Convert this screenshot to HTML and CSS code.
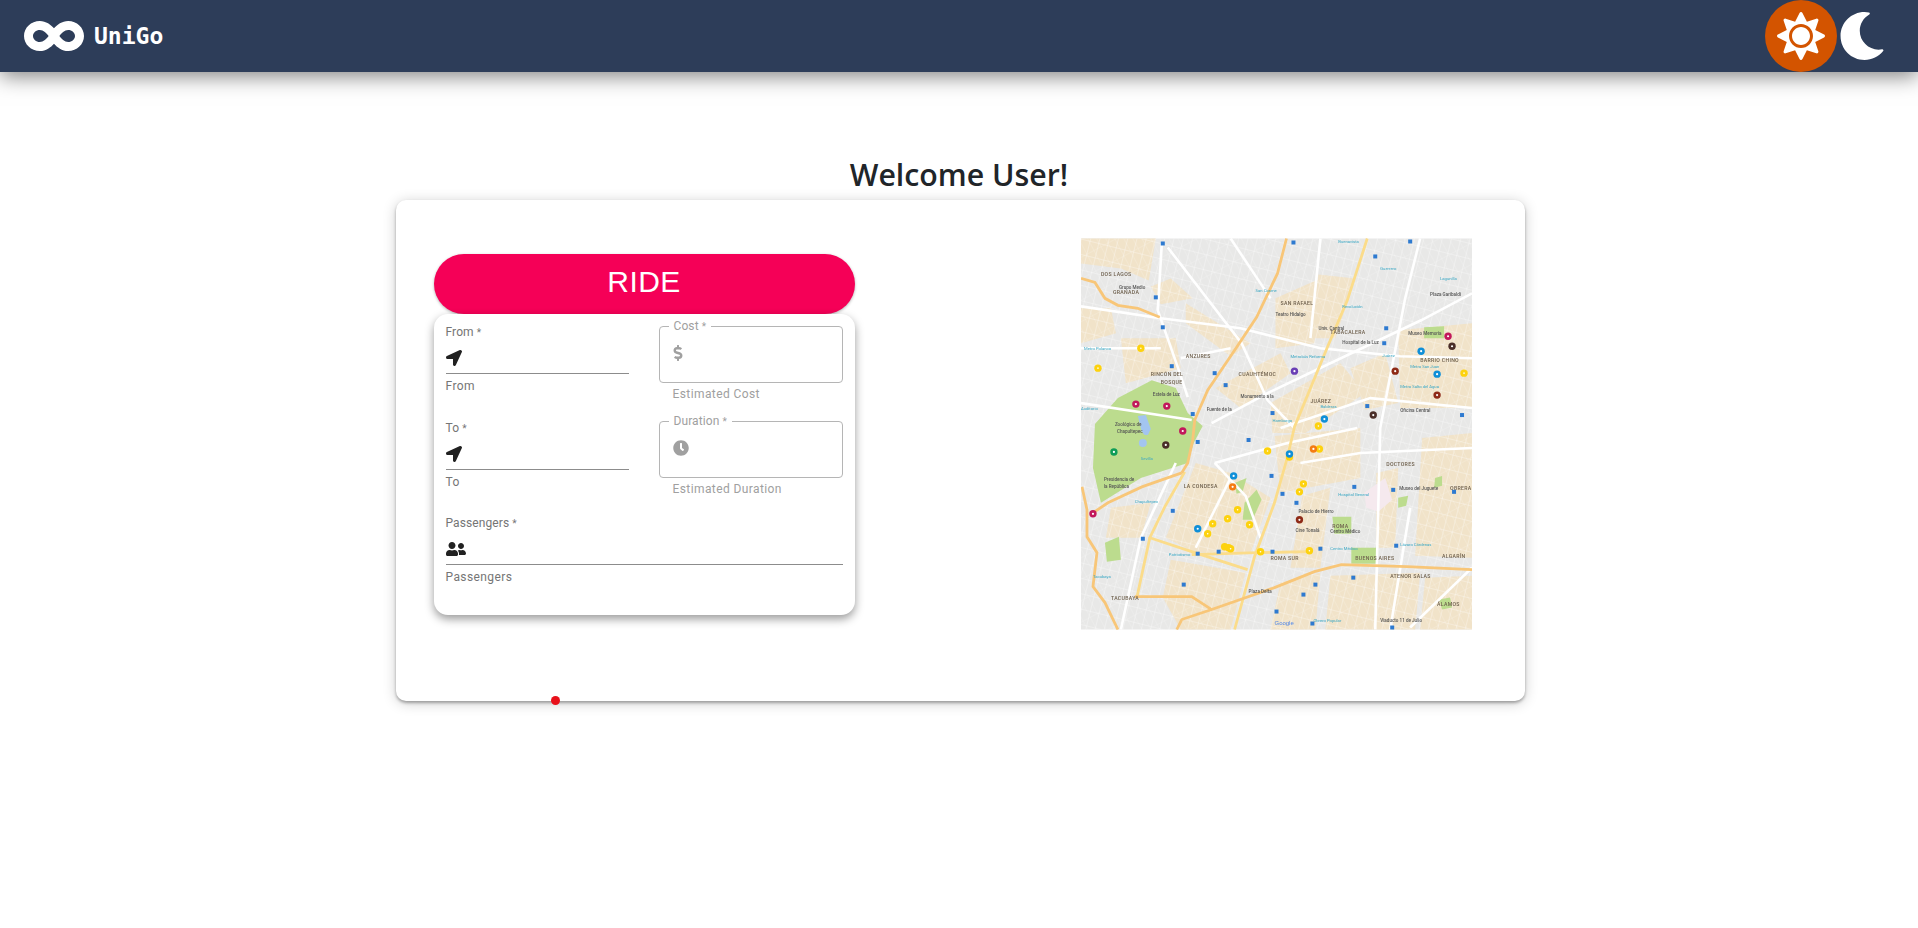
FILE: index.html
```html
<!DOCTYPE html>
<html lang="en">
<head>
<meta charset="utf-8">
<title>UniGo</title>
<link rel="stylesheet" href="styles.css">
</head>
<body>
<header class="navbar">
  <div class="brand">
    <svg class="brand-icon" viewBox="0 0 640 512"><path d="M471.1 96C405 96 353.3 137.3 320 174.6 286.7 137.3 235 96 168.9 96 75.8 96 0 167.8 0 256s75.8 160 168.9 160c66.1 0 117.8-41.3 151.1-78.6 33.3 37.3 85 78.6 151.1 78.6 93.1 0 168.9-71.8 168.9-160S564.2 96 471.1 96zM168.9 320c-40.2 0-72.9-28.7-72.9-64s32.7-64 72.9-64c38.2 0 73.4 36.1 94 64-20.4 27.6-55.9 64-94 64zm302.2 0c-38.2 0-73.4-36.1-94-64 20.4-27.6 55.9-64 94-64 40.2 0 72.9 28.7 72.9 64s-32.7 64-72.9 64z"/></svg>
    <span class="brand-name">UniGo</span>
  </div>
  <div class="theme">
    <div class="theme-sun">
      <svg class="theme-icon" viewBox="0 0 512 512"><path d="M256 160c-52.9 0-96 43.1-96 96s43.1 96 96 96 96-43.1 96-96-43.1-96-96-96zm246.4 80.5l-94.7-47.3 33.5-100.4c4.5-13.6-8.4-26.5-21.9-21.9l-100.4 33.5-47.4-94.8c-6.4-12.8-24.6-12.8-31 0l-47.3 94.7L92.7 70.8c-13.6-4.5-26.5 8.4-21.9 21.9l33.5 100.4-94.7 47.4c-12.8 6.4-12.8 24.6 0 31l94.7 47.3-33.5 100.5c-4.5 13.6 8.4 26.5 21.9 21.9l100.4-33.5 47.3 94.7c6.4 12.8 24.6 12.8 31 0l47.3-94.7 100.4 33.5c13.6 4.5 26.5-8.4 21.9-21.9l-33.5-100.4 94.7-47.3c13-6.5 13-24.7.2-31.1zm-155.9 106c-49.9 49.9-131.1 49.9-181 0-49.9-49.9-49.9-131.1 0-181 49.9-49.9 131.1-49.9 181 0 49.9 49.9 49.9 131.1 0 181z"/></svg>
    </div>
    <svg class="theme-icon moon" viewBox="0 0 512 512"><path d="M283.211 512c78.962 0 151.079-35.925 198.857-94.792 7.068-8.708-.639-21.43-11.562-19.35-124.203 23.654-238.262-71.576-238.262-196.954 0-72.222 38.662-138.635 101.498-174.394 9.686-5.512 7.25-20.197-3.756-22.23A258.156 258.156 0 0 0 283.211 0c-141.309 0-256 114.511-256 256 0 141.309 114.511 256 256 256z"/></svg>
  </div>
</header>

<main class="page">
  <h1 class="title">Welcome User!</h1>
  <section class="card">
    <span class="dot"></span>
    <div class="left">
      <button class="ride">RIDE</button>
      <form class="panel">
        <div class="field">
          <label class="label">From <span class="req">*</span></label>
          <div class="input-row">
            <svg class="icon arrow" viewBox="0 0 512 512"><path d="M444.52 3.52L28.74 195.42c-47.97 22.39-31.98 92.75 19.19 92.75h175.91v175.91c0 51.17 70.36 67.17 92.75 19.19l191.9-415.78c15.99-38.39-25.59-79.97-63.97-63.97z"/></svg>
          </div>
          <p class="helper">From</p>
        </div>
        <div class="outlined">
          <div class="box">
            <span class="box-label">Cost <span class="req">*</span></span>
            <svg class="icon dollar" viewBox="0 0 288 512"><path d="M209.2 233.4l-108-31.6C88.7 198.2 80 186.5 80 173.5c0-16.3 13.2-29.5 29.5-29.5h66.3c12.2 0 24.2 3.7 34.2 10.5 6.1 4.1 14.3 3.1 19.5-2l34.8-34c7.1-6.9 6.1-18.4-1.8-24.5C238 74.8 207.4 64.1 176 64V16c0-8.8-7.2-16-16-16h-32c-8.8 0-16 7.2-16 16v48h-2.5C45.8 64-5.4 118.7.5 183.6c4.2 46.1 39.4 83.6 83.8 96.6l102.5 30c12.5 3.7 21.2 15.3 21.2 28.3 0 16.3-13.2 29.5-29.5 29.5h-66.3C100 368 88 364.3 78 357.5c-6.1-4.1-14.3-3.1-19.5 2l-34.8 34c-7.1 6.9-6.1 18.4 1.8 24.5 24.5 19.2 55.1 29.9 86.5 30v48c0 8.8 7.2 16 16 16h32c8.8 0 16-7.2 16-16v-48.2c46.6-.9 90.3-28.6 105.7-72.7 21.5-61.6-14.6-124.8-72.5-141.7z"/></svg>
          </div>
          <p class="box-helper">Estimated Cost</p>
        </div>
        <div class="field">
          <label class="label">To <span class="req">*</span></label>
          <div class="input-row">
            <svg class="icon arrow" viewBox="0 0 512 512"><path d="M444.52 3.52L28.74 195.42c-47.97 22.39-31.98 92.75 19.19 92.75h175.91v175.91c0 51.17 70.36 67.17 92.75 19.19l191.9-415.78c15.99-38.39-25.59-79.97-63.97-63.97z"/></svg>
          </div>
          <p class="helper">To</p>
        </div>
        <div class="outlined">
          <div class="box">
            <span class="box-label">Duration <span class="req">*</span></span>
            <svg class="icon clock" viewBox="0 0 512 512"><path d="M256,8C119,8,8,119,8,256S119,504,256,504,504,393,504,256,393,8,256,8Zm92.49,313h0l-20,25a16,16,0,0,1-22.49,2.5h0l-67-49.72a40,40,0,0,1-15-31.23V112a16,16,0,0,1,16-16h32a16,16,0,0,1,16,16V256l58,42.5A16,16,0,0,1,348.49,321Z"/></svg>
          </div>
          <p class="box-helper">Estimated Duration</p>
        </div>
        <div class="field wide">
          <label class="label">Passengers <span class="req">*</span></label>
          <div class="input-row">
            <svg class="icon users" viewBox="0 0 640 512"><path d="M192 256c61.9 0 112-50.1 112-112S253.9 32 192 32 80 82.1 80 144s50.1 112 112 112zm76.8 32h-8.3c-20.8 10-43.9 16-68.5 16s-47.6-6-68.5-16h-8.3C51.6 288 0 339.6 0 403.2V432c0 26.5 21.5 48 48 48h288c26.5 0 48-21.5 48-48v-28.8c0-63.6-51.6-115.2-115.2-115.2zM480 256c53 0 96-43 96-96s-43-96-96-96-96 43-96 96 43 96 96 96zm48 32h-3.8c-13.9 4.8-28.6 8-44.2 8s-30.3-3.2-44.2-8H432c-20.4 0-39.2 5.9-55.7 15.4 24.4 26.3 39.7 61.2 39.7 99.8v38.4c0 2.2-.5 4.3-.6 6.4H592c26.5 0 48-21.5 48-48 0-61.9-50.1-112-112-112z"/></svg>
          </div>
          <p class="helper">Passengers</p>
        </div>
      </form>
    </div>

    <svg class="map" viewBox="0 0 392 392">
      <defs>
        <pattern id="gridA" width="9" height="15" patternUnits="userSpaceOnUse" patternTransform="rotate(14)">
          <path class="grid-line" d="M0 0H9M0 0V15"/>
        </pattern>
        <pattern id="gridB" width="8" height="19" patternUnits="userSpaceOnUse" patternTransform="rotate(-28 100 100)">
          <path class="grid-line" d="M0 0H8M0 0V19"/>
        </pattern>
      </defs>
      <rect class="land" width="392" height="392"/>
      <g class="beige">
        <polygon points="0,0 75,0 68,42 40,30 0,25"/>
        <polygon points="70,48 90,40 112,60 80,66"/>
        <polygon points="105,65 170,105 150,118 105,85"/>
        <polygon points="195,60 240,40 234,105 195,110"/>
        <polygon points="238,36 275,40 255,100 232,100"/>
        <polygon points="190,165 260,125 285,155 225,195 192,195"/>
        <polygon points="135,150 200,115 210,135 160,170"/>
        <polygon points="318,92 392,85 392,170 320,170"/>
        <polygon points="270,130 305,115 318,165 285,172"/>
        <polygon points="115,225 150,235 190,260 170,315 115,315 85,300"/>
        <polygon points="194,198 280,190 280,240 200,255"/>
        <polygon points="222,258 250,250 240,330 210,330"/>
        <polygon points="342,200 392,195 392,320 335,318"/>
        <polygon points="296,235 318,230 315,310 296,310"/>
        <polygon points="250,338 340,335 335,392 245,392"/>
        <polygon points="90,322 165,335 150,392 100,392 82,360"/>
        <polygon points="345,340 392,338 392,392 340,392"/>
        <polygon points="0,70 30,70 35,95 0,105"/>
        <polygon points="40,100 95,100 100,130 45,145"/>
        <polygon points="30,270 70,265 60,300 25,300"/>
        <polygon points="200,345 240,335 235,392 190,392"/>
      </g>
      <rect class="grid-a" width="392" height="392"/>
      <rect class="grid-b" width="392" height="392"/>
      <g class="park">
        <polygon points="14,186 37,160 71,142 95,150 107,175 122,188 113,205 107,225 60,240 20,265 12,230"/>
        <polygon points="344,89 364,88 364,100 344,100"/>
        <polygon points="164,265 176,252 181,262 172,282 162,282"/>
        <polygon points="252,279 271,279 271,296 254,296"/>
        <polygon points="271,310 296,310 296,326 271,326"/>
        <polygon points="24,305 38,299 40,322 26,324"/>
        <polygon points="154,245 166,240 162,254 156,256"/>
        <polygon points="318,260 328,258 326,268 318,270"/>
        <polygon points="355,240 362,238 362,248 354,250"/>
        <polygon points="359,362 370,360 372,370 362,372"/>
      </g>
      <polygon class="pink" points="284,255 305,240 312,262 298,274 286,270"/>
      <g class="water">
        <path d="M57 178l8-1 5 14-3 6-6-3z"/>
        <ellipse cx="62" cy="205" rx="4" ry="4"/>
        <ellipse cx="65" cy="193" rx="3" ry="4"/>
      </g>
      <g class="road-w">
        <polyline points="392,55 341,82 271,115 187,155 131,185"/>
        <polyline points="81,5 77,72 97,129 107,159"/>
        <polyline points="87,9 161,105 187,162 214,190"/>
        <polyline points="0,165 111,182"/>
        <polyline points="134,225 207,205 277,190"/>
        <polyline points="134,225 165,258 180,300"/>
        <polyline points="0,68 80,80 160,90 240,110 320,118 392,120"/>
        <polyline points="80,110 0,110"/>
        <polyline points="150,110 100,120"/>
        <polyline points="340,0 325,60 300,190 295,392"/>
        <polyline points="392,170 290,160 200,190"/>
        <polyline points="95,225 60,300 40,392"/>
        <polyline points="240,0 230,100"/>
        <polyline points="150,240 115,310"/>
        <polyline points="150,0 190,60"/>
        <polyline points="392,210 280,215 220,225"/>
        <polyline points="392,330 330,390"/>
        <polyline points="330,270 310,392"/>
      </g>
      <g class="road-y">
        <polyline points="287,0 267,62 247,109 214,189 207,219 194,265 174,319 154,392"/>
        <polyline points="104,234 84,269 69,300 111,314 167,332"/>
        <polyline points="111,317 177,315 227,314"/>
        <polyline points="69,300 56,360"/>
      </g>
      <g class="road-o">
        <polyline points="206,0 197,35 176,79 154,112 127,152 114,182 112,202 107,225 101,235"/>
        <polyline points="0,40 14,44 24,60 37,67 57,70 79,79"/>
        <polyline points="392,332 327,329 261,327 234,334 194,350 131,372 101,382 96,392"/>
        <polyline points="54,359 111,359 131,372"/>
        <polyline points="1,249 6,272 6,299 16,315 12,349 24,365 37,392"/>
        <polyline points="101,235 61,249 27,265 12,275"/>
      </g>
      <g class="tx">
        <text x="32" y="56">GRANADA</text><text x="105" y="120">ANZURES</text><text x="158" y="138">CUAUHTÉMOC</text>
        <text x="70" y="138">RINCÓN DEL</text><text x="80" y="146">BOSQUE</text><text x="200" y="67">SAN RAFAEL</text>
        <text x="250" y="96">TABACALERA</text><text x="340" y="124">BARRIO CHINO</text><text x="230" y="165">JUÁREZ</text>
        <text x="103" y="250">LA CONDESA</text><text x="190" y="322">ROMA SUR</text><text x="306" y="228">DOCTORES</text>
        <text x="370" y="252">OBRERA</text><text x="252" y="290">ROMA</text><text x="275" y="322">BUENOS AIRES</text>
        <text x="310" y="340">ATENOR SALAS</text><text x="362" y="320">ALGARÍN</text><text x="357" y="368">ÁLAMOS</text>
        <text x="30" y="362">TACUBAYA</text><text x="20" y="38">DOS LAGOS</text>
      </g>
      <g class="tx-small">
        <text x="38" y="51">Grupo Medio</text><text x="195" y="78">Teatro Hidalgo</text><text x="238" y="92">Univ. Cantral</text>
        <text x="262" y="106">Hospital de la Luz</text><text x="328" y="97">Museo Memoria</text><text x="350" y="58">Plaza Garibaldi</text>
        <text x="72" y="158">Estela de Luz</text><text x="34" y="188">Zoológico de</text><text x="36" y="195">Chapultepec</text>
        <text x="23" y="243">Presidencia de</text><text x="23" y="250">la República</text><text x="218" y="275">Palacio de Hierro</text>
        <text x="215" y="294">Cine Tonalá</text><text x="250" y="295">Centro Médico</text><text x="319" y="252">Museo del Juguete</text>
        <text x="168" y="355">Plaza Delta</text><text x="300" y="384">Viaducto 11 de Julio</text><text x="126" y="173">Fuente de la</text>
        <text x="160" y="160">Monumento a la</text><text x="320" y="174">Oficina Central</text>
      </g>
      <g class="tx-blue">
        <text x="3" y="112">Metro Polanco</text><text x="175" y="54">San Cosme</text><text x="262" y="70">Revolución</text>
        <text x="258" y="4">Buenavista</text><text x="300" y="32">Guerrero</text><text x="360" y="42">Lagunilla</text>
        <text x="210" y="120">Metrobús Reforma</text><text x="302" y="119">Juárez</text><text x="330" y="130">Metro San Juan</text>
        <text x="320" y="150">Metro Salto del Agua</text><text x="240" y="170">Balderas</text><text x="192" y="184">Hamburgo</text>
        <text x="60" y="222">Sevilla</text><text x="54" y="265">Chapultepec</text><text x="258" y="258">Hospital General</text>
        <text x="250" y="312">Centro Médico</text><text x="320" y="308">Lázaro Cárdenas</text><text x="88" y="318">Patriotismo</text>
        <text x="12" y="340">Tacubaya</text><text x="233" y="384">Obrero Popular</text><text x="0" y="172">Auditorio</text>
      </g>
      <g class="transit">
        <rect x="80" y="3" width="4" height="4"/><rect x="211" y="2" width="4" height="4"/><rect x="293" y="16" width="4" height="4"/>
        <rect x="328" y="1" width="4" height="4"/><rect x="73" y="57" width="4" height="4"/><rect x="80" y="87" width="4" height="4"/>
        <rect x="89" y="126" width="4" height="4"/><rect x="132" y="133" width="4" height="4"/><rect x="143" y="145" width="4" height="4"/>
        <rect x="190" y="173" width="4" height="4"/><rect x="285" y="166" width="4" height="4"/><rect x="304" y="88" width="4" height="4"/>
        <rect x="302" y="103" width="4" height="4"/><rect x="380" y="175" width="4" height="4"/><rect x="110" y="174" width="4" height="4"/>
        <rect x="115" y="202" width="4" height="4"/><rect x="166" y="200" width="4" height="4"/><rect x="189" y="236" width="4" height="4"/>
        <rect x="200" y="254" width="4" height="4"/><rect x="214" y="263" width="4" height="4"/><rect x="90" y="271" width="4" height="4"/>
        <rect x="60" y="299" width="4" height="4"/><rect x="115" y="314" width="4" height="4"/><rect x="136" y="312" width="4" height="4"/>
        <rect x="190" y="312" width="4" height="4"/><rect x="238" y="309" width="4" height="4"/><rect x="314" y="306" width="4" height="4"/>
        <rect x="271" y="338" width="4" height="4"/><rect x="233" y="345" width="4" height="4"/><rect x="221" y="355" width="4" height="4"/>
        <rect x="101" y="345" width="4" height="4"/><rect x="194" y="372" width="4" height="4"/><rect x="230" y="384" width="4" height="4"/>
        <rect x="310" y="388" width="4" height="4"/><rect x="272" y="247" width="4" height="4"/><rect x="311" y="250" width="4" height="4"/>
        <rect x="372" y="252" width="4" height="4"/>
      </g>
      <g class="pins yellow">
        <circle cx="60" cy="110" r="3.7"/><circle cx="17" cy="130" r="3.7"/><circle cx="384" cy="135" r="3.7"/><circle cx="238" cy="188" r="3.7"/>
        <circle cx="187" cy="213" r="3.7"/><circle cx="209" cy="219" r="3.7"/><circle cx="239" cy="211" r="3.7"/><circle cx="223" cy="246" r="3.7"/>
        <circle cx="219" cy="254" r="3.7"/><circle cx="157" cy="272" r="3.7"/><circle cx="147" cy="281" r="3.7"/><circle cx="132" cy="286" r="3.7"/>
        <circle cx="127" cy="296" r="3.7"/><circle cx="169" cy="287" r="3.7"/><circle cx="144" cy="309" r="3.7"/><circle cx="148" cy="310" r="3.7"/>
        <circle cx="150" cy="311" r="3.7"/><circle cx="180" cy="314" r="3.7"/><circle cx="229" cy="313" r="3.7"/>
      </g>
      <g class="pins magenta">
        <circle cx="368" cy="98" r="3.7"/><circle cx="55" cy="166" r="3.7"/><circle cx="86" cy="168" r="3.7"/><circle cx="102" cy="193" r="3.7"/><circle cx="12" cy="276" r="3.7"/>
      </g>
      <g class="pins dark">
        <circle cx="372" cy="108" r="3.7"/><circle cx="293" cy="177" r="3.7"/><circle cx="85" cy="207" r="3.7"/>
      </g>
      <g class="pins blue">
        <circle cx="341" cy="113" r="3.7"/><circle cx="357" cy="136" r="3.7"/><circle cx="244" cy="181" r="3.7"/><circle cx="209" cy="216" r="3.7"/>
        <circle cx="153" cy="238" r="3.7"/><circle cx="117" cy="291" r="3.7"/>
      </g>
      <g class="pins red">
        <circle cx="315" cy="133" r="3.7"/><circle cx="357" cy="157" r="3.7"/><circle cx="219" cy="282" r="3.7"/>
      </g>
      <g class="pins orange">
        <circle cx="233" cy="211" r="3.7"/><circle cx="152" cy="249" r="3.7"/>
      </g>
      <g class="pins purple"><circle cx="214" cy="133" r="3.7"/></g>
      <g class="pins green"><circle cx="33" cy="214" r="3.7"/></g>
      <g class="pin-core">
        <circle cx="60" cy="110" r=".8"/><circle cx="17" cy="130" r=".8"/><circle cx="384" cy="135" r=".8"/><circle cx="238" cy="188" r=".8"/>
        <circle cx="187" cy="213" r=".8"/><circle cx="239" cy="211" r=".8"/><circle cx="223" cy="246" r=".8"/><circle cx="219" cy="254" r=".8"/>
        <circle cx="157" cy="272" r=".8"/><circle cx="147" cy="281" r=".8"/><circle cx="132" cy="286" r=".8"/><circle cx="127" cy="296" r=".8"/>
        <circle cx="169" cy="287" r=".8"/><circle cx="150" cy="311" r=".8"/><circle cx="180" cy="314" r=".8"/><circle cx="229" cy="313" r=".8"/>
        <circle cx="368" cy="98" r="1.1"/><circle cx="55" cy="166" r="1.1"/><circle cx="86" cy="168" r="1.1"/><circle cx="102" cy="193" r="1.1"/><circle cx="12" cy="276" r="1.1"/>
        <circle cx="372" cy="108" r="1.1"/><circle cx="293" cy="177" r="1.1"/><circle cx="85" cy="207" r="1.1"/>
        <circle cx="341" cy="113" r="1.1"/><circle cx="357" cy="136" r="1.1"/><circle cx="244" cy="181" r="1.1"/><circle cx="209" cy="216" r="1.1"/>
        <circle cx="153" cy="238" r="1.1"/><circle cx="117" cy="291" r="1.1"/>
        <circle cx="315" cy="133" r="1.1"/><circle cx="357" cy="157" r="1.1"/><circle cx="219" cy="282" r="1.1"/>
        <circle cx="233" cy="211" r="1.1"/><circle cx="152" cy="249" r="1.1"/><circle cx="214" cy="133" r="1.1"/><circle cx="33" cy="214" r="1.1"/>
      </g>
      <text class="g-logo" x="194" y="387">Google</text>
    </svg>
  </section>
</main>
</body>
</html>
```

FILE: styles.css
```css
* { box-sizing: border-box; }
html, body { margin: 0; height: 100%; }
body { background: #fff; font-family: Roboto, "Liberation Sans", sans-serif; color: #212529; overflow: hidden; }

.navbar {
  height: 72px;
  background: #2d3d59;
  display: flex;
  align-items: center;
  justify-content: space-between;
  padding: 0 32px 0 24px;
  box-shadow: 0 4px 20px rgba(0, 0, 0, .5);
  position: relative;
}
.brand { display: flex; align-items: center; gap: 10px; }
.brand-icon { width: 60px; height: 48px; fill: #fff; }
.brand-name { font: 700 23px "DejaVu Sans Mono", monospace; color: #fff; }
.theme { display: flex; align-items: center; gap: 1px; }
.theme-sun { width: 72px; height: 72px; border-radius: 50%; background: #d35400; display: flex; align-items: center; justify-content: center; }
.theme-icon { width: 48px; height: 48px; fill: #fff; display: block; }

.page { display: flex; flex-direction: column; align-items: center; padding-top: 81px; }
.title { margin: 0 0 4px; font: 600 30.3px/43px "Open Sans", sans-serif; color: #212529; }
.card {
  position: relative;
  left: 1px;
  width: 1129px;
  height: 501px;
  background: #fff;
  border-radius: 10px;
  box-shadow: 0 2px 3px rgba(0, 0, 0, .3), 0 2px 14px rgba(0, 0, 0, .2);
  padding: 38px;
  display: flex;
  gap: 226px;
}
.dot { position: absolute; left: 155px; top: 496px; width: 9px; height: 9px; border-radius: 50%; background: #e8101a; }
.left { width: 421px; padding-top: 16px; }
.ride {
  display: block;
  width: 100%;
  height: 60px;
  border: 0;
  border-radius: 30px;
  background: #f50057;
  color: #fff;
  font: 400 30px/54px "Liberation Sans", sans-serif;
  padding: 0 0 4px;
  letter-spacing: .4px;
  box-shadow: 0 1px 3px rgba(0, 0, 0, .3);
}
.panel {
  height: 301px;
  background: #fff;
  border-radius: 14px;
  box-shadow: 0 4px 10px rgba(0, 0, 0, .4);
  padding: 10px 12px 0;
  display: grid;
  grid-template-columns: 183px 184px;
  grid-template-rows: 96px 95px 96px;
  column-gap: 30px;
}
.field.wide { grid-column: 1 / 3; }
.label { display: block; height: 16px; font-size: 12px; line-height: 17px; color: #757575; letter-spacing: .1px; }
.input-row { height: 33.5px; border-bottom: 1px solid #8c8c8c; display: flex; align-items: flex-end; padding-bottom: 7px; }
.helper { margin: 5px 0 0; font-size: 12px; line-height: 14px; color: #757575; letter-spacing: .4px; }
.req { font-size: 10px; }
.icon { display: block; height: 16px; fill: #212121; }
.arrow { width: 16px; }
.users { width: 20px; }
.outlined { padding-top: 2px; }
.outlined + .field + .outlined { padding-top: 1px; }
.box { position: relative; height: 57px; border: 1px solid #b5b5b5; border-radius: 4px; display: flex; align-items: center; padding: 0 13px 3px; }
.box-label { position: absolute; left: 9px; top: -8px; padding: 0 5px; background: #fff; font-size: 12px; line-height: 14px; color: #a0a0a0; letter-spacing: .1px; }
.box-helper { margin: 4px 0 0 14px; font-size: 12px; line-height: 14px; color: #a0a0a0; letter-spacing: .4px; }
.dollar { width: 10px; fill: #a0a0a0; }
.clock { width: 16px; fill: #a0a0a0; }

.map { width: 391px; height: 392px; display: block; flex: none; filter: blur(.45px); }
.land { fill: #e8e8e7; }
.beige polygon { fill: #f1e3c9; }
.grid-line { stroke: #fff; stroke-width: .9; fill: none; opacity: .65; }
.grid-a { fill: url(#gridA); }
.grid-b { fill: url(#gridB); opacity: .5; }
.park polygon { fill: #bcdc8e; }
.pink { fill: #f5e9ee; }
.water path, .water ellipse { fill: #a3c5f0; }
.road-w polyline { fill: none; stroke: #fff; stroke-width: 2.6; }
.road-y polyline { fill: none; stroke: #fbdc8a; stroke-width: 2.8; }
.road-o polyline { fill: none; stroke: #f8c678; stroke-width: 2.8; }
.tx text { font: 500 5.2px Roboto, sans-serif; fill: #6d5f4c; letter-spacing: .3px; }
.tx-small text { font: 500 4.6px Roboto, sans-serif; fill: #555; }
.tx-blue text { font: 400 4.2px Roboto, sans-serif; fill: #39a7c4; }
.transit rect { fill: #2e7ad0; }
.yellow circle { fill: #fdd20e; }
.magenta circle { fill: #c2185b; }
.dark circle { fill: #4a2e28; }
.blue circle { fill: #0f8fd8; }
.red circle { fill: #8e2a17; }
.orange circle { fill: #f47c12; }
.purple circle { fill: #6a3fb5; }
.green circle { fill: #0f9d58; }
.pin-core circle { fill: #fff; }
.g-logo { font: 500 6px "Liberation Sans", sans-serif; fill: #4f86e8; }
```
